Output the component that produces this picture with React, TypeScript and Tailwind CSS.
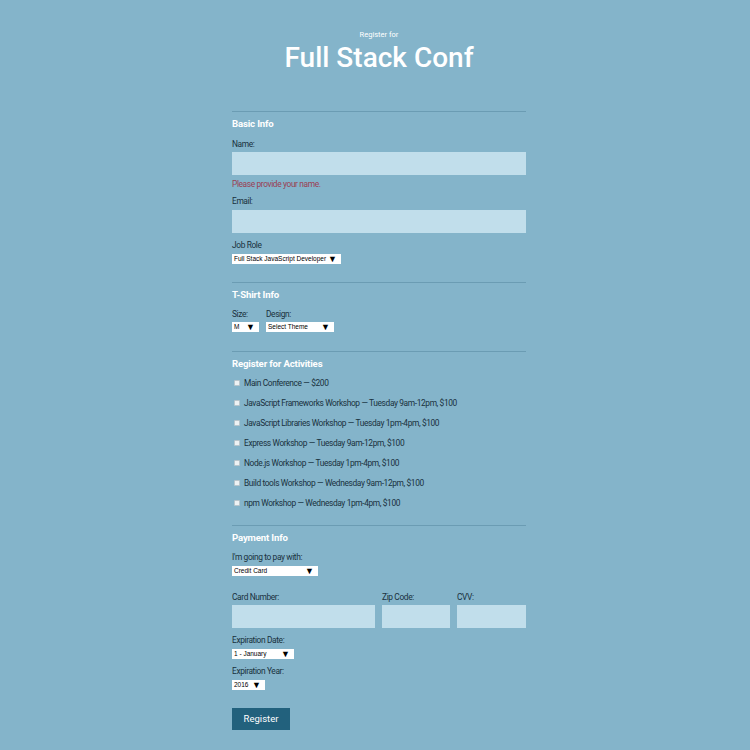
import React from 'react'

const activities = [
  'Main Conference — $200',
  'JavaScript Frameworks Workshop — Tuesday 9am-12pm, $100',
  'JavaScript Libraries Workshop — Tuesday 1pm-4pm, $100',
  'Express Workshop — Tuesday 9am-12pm, $100',
  'Node.js Workshop — Tuesday 1pm-4pm, $100',
  'Build tools Workshop — Wednesday 9am-12pm, $100',
  'npm Workshop — Wednesday 1pm-4pm, $100',
]

function FakeSelect({ value, width }: { value: string; width: string }) {
  return (
    <div
      className={`flex h-[10px] items-center justify-between bg-white pl-[2px] pr-[4px] text-[6.5px] leading-none text-black ${width}`}
      style={{ fontFamily: '"Liberation Sans", Arial, sans-serif' }}
    >
      <span>{value}</span>
      <span className="text-[9px] leading-none">▼</span>
    </div>
  )
}

function Label({ children, className = '' }: { children: React.ReactNode; className?: string }) {
  return (
    <div className={`text-[8.4px] leading-[10px] tracking-[-0.38px] text-[#19313d] ${className}`}>{children}</div>
  )
}

function SectionTitle({ children }: { children: React.ReactNode }) {
  return (
    <div className="border-t border-[#6b9cb3] pt-[6px]">
      <h2 className="text-[9.6px] font-bold leading-[12px] tracking-[-0.15px] text-white">{children}</h2>
    </div>
  )
}

export default function App() {
  return (
    <div
      className="min-h-[750px] w-full bg-[#84b4ca] pb-[20px]"
      style={{ fontFamily: 'Roboto, "Liberation Sans", sans-serif' }}
    >
      <header className="flex flex-col items-center pl-[8px] pt-[30px] text-white">
        <p className="text-[7.5px] leading-[10px]">Register for</p>
        <h1 className="mt-[2px] text-[28px] font-medium leading-[32px]">Full Stack Conf</h1>
      </header>

      <form className="mx-auto mt-[37px] w-[302px] pl-[8px]">
        {/* Basic info */}
        <SectionTitle>Basic Info</SectionTitle>
        <Label className="mt-[9px]">Name:</Label>
        <div className="mt-[3px] h-[23px] w-full bg-[#c1deeb]" />
        <div className="mt-[4px] text-[8.4px] leading-[10px] tracking-[-0.38px] text-[#9b3d52]">
          Please provide your name.
        </div>
        <Label className="mt-[7px]">Email:</Label>
        <div className="mt-[4px] h-[23px] w-full bg-[#c1deeb]" />
        <Label className="mt-[7px]">Job Role</Label>
        <div className="mt-[4px]">
          <FakeSelect value="Full Stack JavaScript Developer" width="w-[109px]" />
        </div>

        {/* T-shirt */}
        <div className="mt-[18px]">
          <SectionTitle>T-Shirt Info</SectionTitle>
        </div>
        <div className="mt-[8px] flex gap-[7px]">
          <div>
            <Label>Size:</Label>
            <div className="mt-[3px]">
              <FakeSelect value="M" width="w-[27px]" />
            </div>
          </div>
          <div>
            <Label>Design:</Label>
            <div className="mt-[3px]">
              <FakeSelect value="Select Theme" width="w-[68px]" />
            </div>
          </div>
        </div>

        {/* Activities */}
        <div className="mt-[19px]">
          <SectionTitle>Register for Activities</SectionTitle>
        </div>
        <div className="mt-[8px] flex flex-col gap-[10px]">
          {activities.map((a) => (
            <div key={a} className="flex items-center gap-[4px] pl-[2px]">
              <span className="h-[6px] w-[6px] rounded-[1px] border border-[#b9c6cc] bg-[#eef2f4]" />
              <span className="text-[8.4px] leading-[10px] tracking-[-0.38px] text-[#19313d]">{a}</span>
            </div>
          ))}
        </div>

        {/* Payment */}
        <div className="mt-[17px]">
          <SectionTitle>Payment Info</SectionTitle>
        </div>
        <Label className="mt-[8px]">I'm going to pay with:</Label>
        <div className="mt-[4px]">
          <FakeSelect value="Credit Card" width="w-[86px]" />
        </div>
        <div className="mt-[16px] flex gap-[7px]">
          <div className="w-[143px]">
            <Label>Card Number:</Label>
            <div className="mt-[3px] h-[23px] bg-[#c1deeb]" />
          </div>
          <div className="w-[68px]">
            <Label>Zip Code:</Label>
            <div className="mt-[3px] h-[23px] bg-[#c1deeb]" />
          </div>
          <div className="flex-1">
            <Label>CVV:</Label>
            <div className="mt-[3px] h-[23px] bg-[#c1deeb]" />
          </div>
        </div>
        <Label className="mt-[7px]">Expiration Date:</Label>
        <div className="mt-[4px]">
          <FakeSelect value="1 - January" width="w-[62px]" />
        </div>
        <Label className="mt-[7px]">Expiration Year:</Label>
        <div className="mt-[4px]">
          <FakeSelect value="2016" width="w-[33px]" />
        </div>
        <button type="button" className="mt-[18px] h-[22px] w-[58px] bg-[#22617d] text-[9.5px] text-white">
          Register
        </button>
      </form>
    </div>
  )
}
